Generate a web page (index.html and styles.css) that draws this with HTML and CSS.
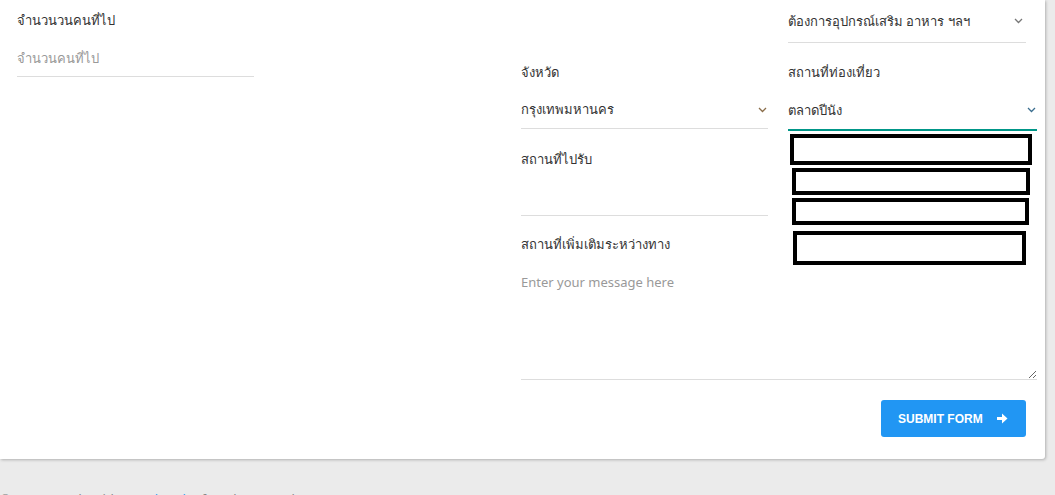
FILE: index.html
```html
<!DOCTYPE html>
<html>
<head>
  <title>Booking Form</title>
  <link rel="stylesheet" href="styles.css">
</head>
<body>
  <div class="card">
    <div class="form-row">
      <div class="col-left">
        <div class="field">
          <label class="label">จำนวนวนคนที่ไป</label>
          <input class="input" type="text" placeholder="จำนวนคนที่ไป">
        </div>
      </div>

      <div class="col-right">
        <div class="extra-row">
          <div class="select extra">
            <span>ต้องการอุปกรณ์เสริม อาหาร ฯลฯ</span>
            <svg class="chev" width="9" height="6" viewBox="0 0 9 6"><path d="M1 1l3.5 3.5L8 1" fill="none" stroke="#777" stroke-width="1.3"/></svg>
          </div>
        </div>

        <div class="pair">
          <div class="field">
            <label class="label">จังหวัด</label>
            <div class="select">
              <span>กรุงเทพมหานคร</span>
              <svg class="chev" width="9" height="6" viewBox="0 0 9 6"><path d="M1 1l3.5 3.5L8 1" fill="none" stroke="#8a6d4a" stroke-width="1.3"/></svg>
            </div>
          </div>
          <div class="field">
            <label class="label">สถานที่ท่องเที่ยว</label>
            <div class="select focused">
              <span>ตลาดปีนัง</span>
              <svg class="chev" width="9" height="6" viewBox="0 0 9 6"><path d="M1 1l3.5 3.5L8 1" fill="none" stroke="#3b6e8f" stroke-width="1.3"/></svg>
              <div class="dropdown">
                <div class="opt opt1"></div>
                <div class="opt opt2"></div>
                <div class="opt opt3"></div>
                <div class="opt opt4"></div>
              </div>
            </div>
          </div>
        </div>

        <div class="pair">
          <div class="field pickup">
            <label class="label">สถานที่ไปรับ</label>
            <input class="input tall" type="text">
          </div>
        </div>

        <div class="field message">
          <label class="label">สถานที่เพิ่มเติมระหว่างทาง</label>
          <textarea class="textarea" placeholder="Enter your message here"></textarea>
        </div>

        <div class="actions">
          <button class="btn-submit">SUBMIT FORM
            <svg width="11" height="11" viewBox="0 0 11 11"><path d="M0 4h5V0.5L10.5 5.5 5 10.5V7H0z" fill="#fff"/></svg>
          </button>
        </div>
      </div>
    </div>
  </div>

  <footer class="footer">
    © 2018 , made with <a href="#">Creative Tim</a> for a better web.
  </footer>
</body>
</html>
```

FILE: styles.css
```css
body {
  margin: 0;
  padding: 0;
  background: #ebebeb;
  font-family: "Noto Sans", "Open Sans", sans-serif;
  font-size: 13px;
  color: #333;
}
.card {
  width: 1045px;
  height: 459px;
  background: #fff;
  box-shadow: 1px 1px 3px rgba(0, 0, 0, 0.25);
  border-bottom-right-radius: 3px;
  box-sizing: border-box;
  padding: 0 8px 0 17px;
}
.form-row {
  display: flex;
  justify-content: space-between;
}
.col-left {
  width: 237px;
  padding-top: 9px;
}
.col-left .input {
  margin-top: 11px;
  height: 32px;
  padding-bottom: 2px;
}
.col-right {
  width: 516px;
}
.field {
  display: flex;
  flex-direction: column;
}
.label {
  line-height: 22px;
  color: #333;
}
.input {
  border: none;
  border-bottom: 1px solid #ddd;
  outline: none;
  padding: 0;
  font: inherit;
  color: #333;
  width: 100%;
}
.input::placeholder,
.textarea::placeholder {
  color: #999;
}
.extra-row {
  display: flex;
  justify-content: flex-end;
  padding-right: 11px;
}
.select {
  position: relative;
  display: flex;
  align-items: center;
  justify-content: space-between;
  height: 38px;
  border-bottom: 1px solid #ddd;
  box-sizing: border-box;
}
.select.extra {
  width: 238px;
  height: 43px;
  padding-right: 2px;
}
.select .chev {
  margin-right: 1px;
}
.select.focused {
  border-bottom: 2px solid #009688;
  height: 40px;
}
.pair {
  display: grid;
  grid-template-columns: 247px 249px;
  column-gap: 20px;
  align-items: start;
}
.extra-row + .pair {
  padding-top: 18px;
}
.extra-row + .pair .label {
  margin-bottom: 8px;
}
.pickup {
  padding-top: 17px;
}
.pickup .tall {
  height: 37px;
  margin-top: 8px;
}
.message {
  padding-top: 17px;
}
.message .label {
  margin-bottom: 18px;
}
.textarea {
  border: none;
  border-bottom: 1px solid #ddd;
  outline: none;
  padding: 0;
  font: inherit;
  color: #333;
  height: 106px;
  resize: vertical;
}
.dropdown {
  position: absolute;
  top: 100%;
  left: 0;
  padding-top: 5px;
}
.opt {
  border: 4px solid #000;
  background: #fff;
  box-sizing: border-box;
}
.opt1 {
  width: 242px;
  height: 31px;
  margin-left: 2px;
}
.opt2 {
  width: 238px;
  height: 27px;
  margin: 3px 0 0 4px;
}
.opt3 {
  width: 237px;
  height: 27px;
  margin: 3px 0 0 4px;
}
.opt4 {
  width: 233px;
  height: 34px;
  margin: 6px 0 0 5px;
}
.actions {
  display: flex;
  justify-content: flex-end;
  padding: 20px 11px 0 0;
}
.btn-submit {
  display: flex;
  align-items: center;
  gap: 14px;
  width: 145px;
  height: 37px;
  padding: 0 0 0 17px;
  background: #2196f3;
  color: #fff;
  border: none;
  border-radius: 3px;
  font-family: "Liberation Sans", Arial, sans-serif;
  font-size: 12px;
  font-weight: bold;
  cursor: pointer;
}
.footer {
  padding: 31px 0 0 0;
  color: #888;
  font-size: 13px;
}
.footer a {
  color: #2196f3;
  text-decoration: none;
}
```
